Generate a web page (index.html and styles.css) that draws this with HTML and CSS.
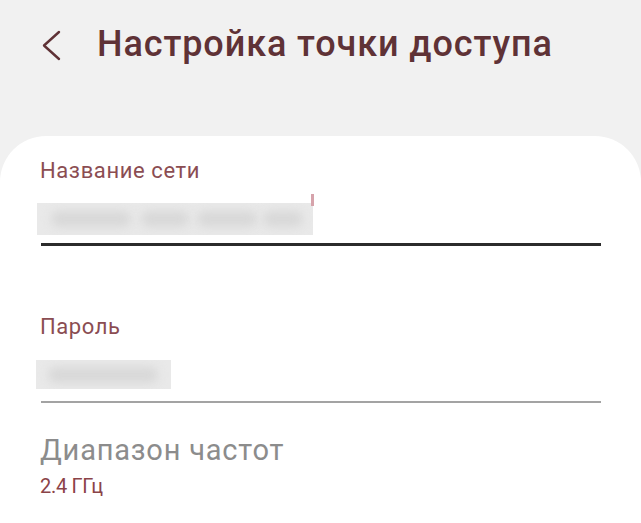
FILE: index.html
```html
<!DOCTYPE html>
<html lang="ru">
<head>
<meta charset="utf-8">
<title>Настройка точки доступа</title>
<link rel="stylesheet" href="styles.css">
</head>
<body>
<header class="header">
  <svg class="back" width="20" height="32" viewBox="0 0 20 32" aria-hidden="true">
    <polyline points="17,2 2,15.5 17,29" fill="none" stroke="#5f3236" stroke-width="2.4" stroke-linecap="round" stroke-linejoin="round"/>
  </svg>
  <h1 class="title">Настройка точки доступа</h1>
</header>
<main class="card">
  <div class="label">Название сети</div>
  <div class="field field-active">
    <div class="blur blur-name">
      <span class="blob b1"></span><span class="blob b2"></span><span class="blob b3"></span><span class="blob b4"></span>
    </div>
    <span class="cursor"></span>
  </div>
  <div class="label label-pass">Пароль</div>
  <div class="field field-pass">
    <div class="blur blur-pass">
      <span class="blob b5"></span>
    </div>
  </div>
  <div class="setting-title">Диапазон частот</div>
  <div class="setting-value">2.4 ГГц</div>
</main>
</body>
</html>
```
FILE: styles.css
```css
html, body {
  margin: 0;
  padding: 0;
}
body {
  width: 641px;
  height: 523px;
  overflow: hidden;
  background: #f1f1f1;
  font-family: Roboto, "Noto Sans", "DejaVu Sans", sans-serif;
}
.header {
  height: 136px;
  box-sizing: border-box;
  padding: 24px 0 0 42px;
  display: flex;
  align-items: flex-start;
}
.back {
  display: block;
  margin-top: 6px;
  flex: none;
}
.title {
  margin: 0 0 0 35px;
  font-size: 36px;
  line-height: 40px;
  font-weight: 500;
  color: #5f3236;
  letter-spacing: 0.9px;
  white-space: nowrap;
}
.card {
  background: #ffffff;
  border-radius: 46px 46px 0 0;
  padding: 22px 40px 0 40px;
  height: 387px;
  box-sizing: border-box;
}
.label {
  font-size: 22px;
  line-height: 26px;
  color: #8b4d52;
  letter-spacing: 0.6px;
}
.field {
  position: relative;
}
.field-active {
  margin-top: 10px;
  padding-top: 9px;
  border-bottom: 3px solid #2b2b2b;
  padding-bottom: 8px;
  margin-left: 1px;
}
.cursor {
  position: absolute;
  left: 270px;
  top: 0;
  width: 3px;
  height: 12px;
  background: #d6a3ab;
}
.blur {
  position: relative;
  background: #e9e9e9;
  overflow: hidden;
}
.blur-name {
  width: 276px;
  height: 32px;
  margin-left: -4px;
}
.blob {
  position: absolute;
  top: 8px;
  height: 16px;
  border-radius: 8px;
  background: #d8d8d8;
  filter: blur(5px);
}
.b1 { left: 14px; width: 80px; }
.b2 { left: 104px; width: 48px; }
.b3 { left: 160px; width: 60px; }
.b4 { left: 226px; width: 40px; }
.label-pass {
  margin-top: 68px;
}
.field-pass {
  margin-top: 20px;
  padding-bottom: 12px;
  border-bottom: 2px solid #a3a3a3;
  margin-left: 1px;
}
.blur-pass {
  width: 135px;
  height: 29px;
  margin-left: -5px;
}
.b5 { left: 12px; width: 110px; top: 7px; }
.setting-title {
  margin-top: 30px;
  font-size: 29px;
  line-height: 34px;
  color: #8c8c8c;
  letter-spacing: 0.8px;
}
.setting-value {
  margin-top: 7px;
  font-size: 20px;
  line-height: 24px;
  color: #8b4348;
  letter-spacing: -0.3px;
}
```
